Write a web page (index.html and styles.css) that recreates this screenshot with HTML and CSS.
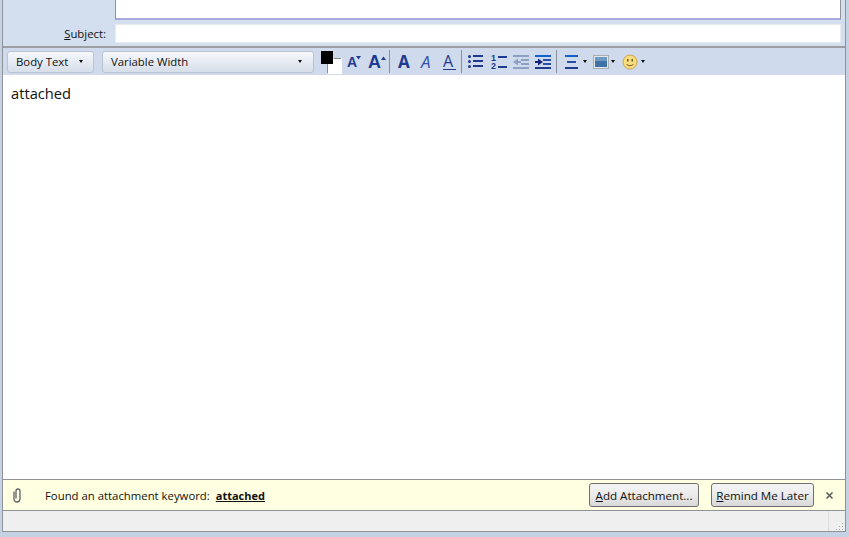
FILE: index.html
```html
<!DOCTYPE html>
<html lang="en">
<head>
  <meta charset="UTF-8" />
  <title>Write</title>
  <link rel="stylesheet" href="styles.css">
</head>
<body>
  <div class="window">
    <div class="header">
      <div class="addr-box"></div>
      <div class="subject-row">
        <label class="subject-label"><u>S</u>ubject:</label>
        <div class="subject-input"></div>
      </div>
    </div>

    <div class="toolbar">
      <button class="drop drop-style">Body Text <span class="caret"></span></button>
      <button class="drop drop-font">Variable Width <span class="caret"></span></button>

      <div class="color-pick">
        <svg width="21" height="23" viewBox="0 0 21 23">
          <rect x="7" y="7" width="14" height="16" fill="#fff"/>
          <path d="M12.5 7.5H20M6.5 13V22" stroke="#8a8a8a" fill="none"/>
          <rect x="0" y="0" width="12" height="13" fill="#000"/>
        </svg>
      </div>

      <div class="size-btn size-small">A<svg class="tick" width="5" height="4" viewBox="0 0 5 4"><path d="M0 0H5L2.5 3.5Z" fill="#1f3a8f"/></svg></div>
      <div class="size-btn size-big">A<svg class="tick" width="5" height="4" viewBox="0 0 5 4"><path d="M0 4H5L2.5 .5Z" fill="#1f3a8f"/></svg></div>
      <div class="sep sep-a"></div>
      <div class="fmt fmt-bold">A</div>
      <div class="fmt fmt-italic">A</div>
      <div class="fmt fmt-under">A</div>
      <div class="sep sep-b"></div>

      <svg class="ico ico-bullets" width="15" height="15" viewBox="0 0 15 15">
        <g fill="#1f3a8f">
          <circle cx="1.5" cy="2.5" r="1.5"/><circle cx="1.5" cy="7.5" r="1.5"/><circle cx="1.5" cy="12.5" r="1.5"/>
          <rect x="5" y="1" width="10" height="2"/><rect x="5" y="6" width="10" height="2"/><rect x="5" y="11" width="10" height="2"/>
        </g>
      </svg>
      <div class="ico-numbers">
        <span class="nums">1<br>2</span>
        <svg width="9" height="14" viewBox="0 0 9 14"><path d="M0 2H9M0 12H9" stroke="#1f3a8f" stroke-width="2"/></svg>
      </div>
      <svg class="ico ico-outdent" width="16" height="14" viewBox="0 0 16 14">
        <path d="M0 1H16M8 5H16M8 9H16M0 13H16" stroke="#8ea1c2" stroke-width="2"/>
        <path d="M5 3.5V10.5L0 7Z" fill="#8ea1c2"/><path d="M4 7H8" stroke="#8ea1c2" stroke-width="2"/>
      </svg>
      <svg class="ico ico-indent" width="16" height="14" viewBox="0 0 16 14">
        <path d="M0 1H16" stroke="#1263c9" stroke-width="2"/>
        <path d="M8 5H16M8 9H16" stroke="#2a4ea8" stroke-width="2"/><path d="M0 13H16" stroke="#1f3a8f" stroke-width="2"/>
        <path d="M3 3.5V10.5L8 7Z" fill="#12257a"/><path d="M0 7H4" stroke="#12257a" stroke-width="2"/>
      </svg>
      <div class="sep sep-c"></div>

      <svg class="ico ico-align" width="13" height="14" viewBox="0 0 13 14">
        <path d="M0 1H13" stroke="#1263c9" stroke-width="2"/><path d="M2 7H11" stroke="#2a4ea8" stroke-width="2"/><path d="M0 13H13" stroke="#1f3a8f" stroke-width="2"/>
      </svg>
      <span class="caret caret-align"></span>
      <svg class="ico ico-image" width="16" height="14" viewBox="0 0 16 14">
        <rect x=".5" y=".5" width="15" height="13" fill="#e4e7ea" stroke="#a9aeb3"/>
        <rect x="2" y="2" width="12" height="10" fill="#6f9ac4"/>
        <rect x="2" y="6" width="12" height="6" fill="#3f73a8"/>
      </svg>
      <span class="caret caret-image"></span>
      <svg class="ico ico-smile" width="16" height="16" viewBox="0 0 16 16">
        <circle cx="8" cy="8" r="7" fill="#f8dc80" stroke="#cfa24a"/>
        <rect x="5" y="5" width="1.5" height="2.5" fill="#6b5a24"/><rect x="9.5" y="5" width="1.5" height="2.5" fill="#6b5a24"/>
        <path d="M4.5 10C6 12.2 10 12.2 11.5 10" stroke="#7a6426" fill="none"/>
      </svg>
      <span class="caret caret-smile"></span>
    </div>

    <div class="editor">attached</div>

    <div class="notice">
      <svg class="clip" width="10" height="15" viewBox="0 0 10 15">
        <path d="M2 3.5V10.5C2 12.6 3.2 14 5 14C6.8 14 8 12.6 8 10.5V3C8 1.8 7.2 1 6 1C4.8 1 4 1.8 4 3V10.5" fill="none" stroke="#5c6066" stroke-width="1.3"/>
      </svg>
      <span class="notice-text">Found an attachment keyword:</span>
      <b class="notice-word">attached</b>
      <button class="btn btn-add"><u>A</u>dd Attachment...</button>
      <button class="btn btn-remind"><u>R</u>emind Me Later</button>
      <svg class="close" width="7" height="7" viewBox="0 0 7 7">
        <path d="M.5 .5L6.5 6.5M6.5 .5L.5 6.5" stroke="#55585c" stroke-width="1.5"/>
      </svg>
    </div>

    <div class="status">
      <div class="grip">
        <svg width="10" height="10" viewBox="0 0 10 10">
          <g fill="#a9adb1"><rect x="7" y="2" width="1" height="1"/><rect x="4" y="5" width="1" height="1"/><rect x="7" y="5" width="1" height="1"/><rect x="1" y="8" width="1" height="1"/><rect x="4" y="8" width="1" height="1"/><rect x="7" y="8" width="1" height="1"/></g>
        </svg>
      </div>
    </div>
  </div>
</body>
</html>
```

FILE: styles.css
```css
* {
  margin: 0;
  padding: 0;
  box-sizing: border-box;
}
html, body {
  height: 100%;
  overflow: hidden;
}
body {
  background-color: #c5d2e3;
  font-family: "Open Sans", "Noto Sans", sans-serif;
  font-size: 11.35px;
  color: #111;
}
.window {
  width: 844px;
  height: 532px;
  margin-left: 2px;
  display: flex;
  flex-direction: column;
  border-left: 1px solid #8f9296;
  border-right: 1px solid #8f9296;
  border-bottom: 1px solid #8f9296;
}

/* address area */
.header {
  height: 48px;
  padding-left: 112px;
  padding-right: 4px;
  background-color: #d3dfee;
  border-bottom: 2px solid #9c9ea1;
}
.addr-box {
  height: 20px;
  background: #fff;
  border-left: 1px solid #8f9296;
  border-right: 1px solid #8f9296;
  border-bottom: 2px solid #a9a8dc;
}
.subject-row {
  margin-top: 3px;
  margin-left: -112px;
  display: flex;
  justify-content: flex-end;
  align-items: center;
  gap: 9px;
}
.subject-label {
  line-height: 20px;
  margin-top: 1px;
}
.subject-input {
  width: 726px;
  height: 19px;
  background: #fff;
  border: 1px solid #e6ebf2;
}

/* toolbar */
.toolbar {
  height: 27px;
  display: flex;
  align-items: center;
  padding-left: 4px;
  background-color: #cfdbec;
}
.drop {
  height: 22px;
  display: flex;
  align-items: center;
  justify-content: space-between;
  font-family: inherit;
  font-size: 11.35px;
  color: #111;
  background: linear-gradient(#f6f8fb, #e6ebf3 50%, #d6dee9);
  border: 1px solid #b9c3d1;
  border-radius: 3px;
}
.drop-style {
  width: 87px;
  padding: 0 10px 0 8px;
}
.drop-font {
  width: 212px;
  margin-left: 8px;
  padding: 0 11px 0 8px;
}
.caret {
  display: inline-block;
  width: 0;
  height: 0;
  border-left: 2.5px solid transparent;
  border-right: 2.5px solid transparent;
  border-top: 3px solid #111;
}
.color-pick {
  width: 21px;
  height: 23px;
  margin-left: 7px;
  margin-top: 1px;
}
.color-pick svg {
  display: block;
}
.size-btn {
  position: relative;
  color: #1f3a8f;
  font-family: "Liberation Sans", sans-serif;
  font-weight: bold;
  line-height: 16px;
}
.tick {
  position: absolute;
  top: 2px;
  right: 0;
}
.size-small {
  width: 14px;
  margin-left: 5px;
  font-size: 14px;
}
.size-big {
  width: 18px;
  margin-left: 7px;
  font-size: 18px;
}
.sep {
  width: 1px;
  height: 23px;
  background: #87909c;
}
.sep-a { margin-left: 3px; }
.sep-b { margin-left: 5px; }
.sep-c { margin-left: 5px; }
.fmt {
  color: #1f3a8f;
  font-family: "Open Sans", sans-serif;
  font-size: 17px;
  line-height: 20px;
}
.fmt-bold {
  margin-left: 8px;
  width: 16px;
  font-weight: bold;
}
.fmt-italic {
  margin-left: 7px;
  width: 15px;
  font-style: italic;
  font-weight: normal;
  color: #3350a6;
}
.fmt-under {
  margin-left: 7px;
  width: 13px;
  font-size: 16px;
  line-height: 16px;
  font-weight: normal;
  border-bottom: 1px solid #1f3a8f;
}
.ico {
  display: block;
  flex: none;
}
.ico-bullets { margin-left: 6px; }
.ico-numbers {
  display: flex;
  align-items: center;
  gap: 1px;
  margin-left: 8px;
  width: 16px;
}
.nums {
  width: 6px;
  font-family: "Liberation Sans", sans-serif;
  font-size: 9px;
  font-weight: bold;
  line-height: 8px;
  color: #1f3a8f;
}
.ico-outdent { margin-left: 6px; }
.ico-indent { margin-left: 6px; }
.ico-align { margin-left: 8px; }
.caret-align { margin-left: 5px; }
.ico-image { margin-left: 6px; }
.caret-image { margin-left: 2px; }
.ico-smile { margin-left: 7px; }
.caret-smile { margin-left: 3px; }

/* message body */
.editor {
  flex: 1;
  padding: 8px 8px;
  background: #fff;
  font-size: 14.7px;
  line-height: 20px;
  color: #111;
  border-bottom: 1px solid #8f9296;
}

/* attachment reminder */
.notice {
  height: 31px;
  display: flex;
  align-items: center;
  padding-left: 9px;
  background-color: #ffffe1;
  border-bottom: 1px solid #8f9296;
}
.clip {
  flex: none;
}
.notice-text {
  margin-left: 23px;
}
.notice-word {
  margin-left: 6px;
  font-size: 11px;
  text-decoration: underline;
}
.btn {
  height: 24px;
  font-family: inherit;
  font-size: 11.6px;
  color: #111;
  background: linear-gradient(#f4f4f4, #ebebeb 50%, #d8d8d8);
  border: 1px solid #707070;
  border-radius: 3px;
}
.btn-add {
  width: 110px;
  margin-left: auto;
}
.btn-remind {
  width: 103px;
  margin-left: 12px;
}
.close {
  margin-left: 12px;
  margin-right: 12px;
}

/* status bar */
.status {
  height: 20px;
  display: flex;
  justify-content: flex-end;
  background-color: #efefef;
}
.grip {
  width: 17px;
  display: flex;
  align-items: flex-end;
  justify-content: flex-end;
  border-left: 1px solid #dcdcdc;
}
.grip svg {
  display: block;
}
```
